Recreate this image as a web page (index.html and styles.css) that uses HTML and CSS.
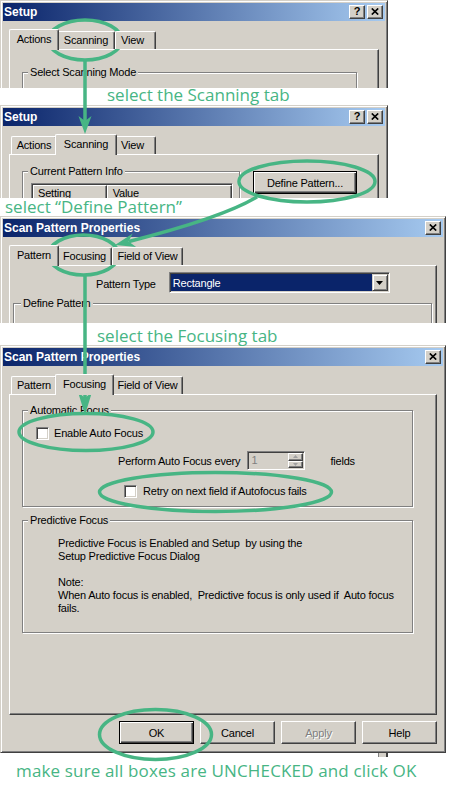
FILE: index.html
```html
<!DOCTYPE html>
<html>
<head>
<meta charset="utf-8">
<title>Setup steps</title>
<link rel="stylesheet" href="styles.css">
</head>
<body>

<div class="cut cut1">
  <div class="win setup tall">
    <div class="titlebar">
      <span class="ttext">Setup</span>
      <span class="tbtns">
        <span class="tbtn">?</span>
        <span class="tbtn"><svg width="8" height="7" viewBox="0 0 8 7"><path d="M0.8 0.5L7.2 6.5M7.2 0.5L0.8 6.5" stroke="#000" stroke-width="1.7"/></svg></span>
      </span>
    </div>
    <div class="client">
      <div class="tabs">
        <div class="tab sel w-actions">Actions</div>
        <div class="tab w-scanning">Scanning</div>
        <div class="tab w-view">View</div>
      </div>
      <div class="panel panel-tall">
        <div class="group g-mode"><span class="glabel">Select Scanning Mode</span></div>
      </div>
    </div>
  </div>
</div>

<div class="strip s1">select the Scanning tab</div>

<div class="cut cut2">
  <div class="win setup tall">
    <div class="titlebar">
      <span class="ttext">Setup</span>
      <span class="tbtns">
        <span class="tbtn">?</span>
        <span class="tbtn"><svg width="8" height="7" viewBox="0 0 8 7"><path d="M0.8 0.5L7.2 6.5M7.2 0.5L0.8 6.5" stroke="#000" stroke-width="1.7"/></svg></span>
      </span>
    </div>
    <div class="client">
      <div class="tabs">
        <div class="tab w-actions">Actions</div>
        <div class="tab sel w-scanning">Scanning</div>
        <div class="tab w-view">View</div>
      </div>
      <div class="panel panel-tall panel-row">
        <div class="group g-info">
          <span class="glabel">Current Pattern Info</span>
          <div class="lv">
            <div class="lvh">
              <div class="lvc lvc-set">Setting</div>
              <div class="lvc lvc-val">Value</div>
            </div>
          </div>
        </div>
        <div class="btn def b-define">Define Pattern...</div>
      </div>
    </div>
  </div>
</div>

<div class="strip s2">select “Define Pattern”</div>

<div class="cut cut3">
  <div class="win spp tall">
    <div class="titlebar">
      <span class="ttext">Scan Pattern Properties</span>
      <span class="tbtns">
        <span class="tbtn"><svg width="8" height="7" viewBox="0 0 8 7"><path d="M0.8 0.5L7.2 6.5M7.2 0.5L0.8 6.5" stroke="#000" stroke-width="1.7"/></svg></span>
      </span>
    </div>
    <div class="client">
      <div class="tabs">
        <div class="tab sel w-pattern">Pattern</div>
        <div class="tab w-focusing">Focusing</div>
        <div class="tab w-fov">Field of View</div>
      </div>
      <div class="panel panel-tall">
        <div class="ptrow">
          <span class="ptlabel">Pattern Type</span>
          <div class="combo">
            <div class="combosel">Rectangle</div>
            <div class="combobtn"><svg width="7" height="4" viewBox="0 0 7 4"><path d="M0 0H7L3.5 4Z" fill="#000"/></svg></div>
          </div>
        </div>
        <div class="group g-def"><span class="glabel gl-def">Define Pattern</span></div>
      </div>
    </div>
  </div>
</div>

<div class="strip s3">select the Focusing tab</div>

<div class="win spp full">
  <div class="titlebar">
    <span class="ttext">Scan Pattern Properties</span>
    <span class="tbtns">
      <span class="tbtn"><svg width="8" height="7" viewBox="0 0 8 7"><path d="M0.8 0.5L7.2 6.5M7.2 0.5L0.8 6.5" stroke="#000" stroke-width="1.7"/></svg></span>
    </span>
  </div>
  <div class="client">
    <div class="tabs">
      <div class="tab w-pattern">Pattern</div>
      <div class="tab sel w-focusing">Focusing</div>
      <div class="tab w-fov">Field of View</div>
    </div>
    <div class="panel panel-main">
      <div class="group g-auto">
        <span class="glabel">Automatic Focus</span>
        <div class="chkrow r-enable"><span class="chk"></span><span>Enable Auto Focus</span></div>
        <div class="perform">
          <span>Perform Auto Focus every</span>
          <div class="spin">
            <div class="spinval">1</div>
            <div class="spinbtns">
              <div class="spinbtn up"><svg width="5" height="3" viewBox="0 0 5 3"><path d="M0 3H5L2.5 0Z" fill="#a0a0a0"/></svg></div>
              <div class="spinbtn dn"><svg width="5" height="3" viewBox="0 0 5 3"><path d="M0 0H5L2.5 3Z" fill="#a0a0a0"/></svg></div>
            </div>
          </div>
          <span class="fields">fields</span>
        </div>
        <div class="chkrow r-retry"><span class="chk"></span><span>Retry on next field if Autofocus fails</span></div>
      </div>
      <div class="group g-pred">
        <span class="glabel">Predictive Focus</span>
        <div class="predtext">Predictive Focus is Enabled and Setup&nbsp; by using the<br>Setup Predictive Focus Dialog<br><br>Note:<br>When Auto focus is enabled,&nbsp; Predictive focus is only used if&nbsp; Auto focus<br>fails.</div>
      </div>
    </div>
    <div class="btnrow">
      <div class="btn def">OK</div>
      <div class="btn">Cancel</div>
      <div class="btn dis">Apply</div>
      <div class="btn">Help</div>
    </div>
  </div>
</div>

<div class="strip s4">
  <div class="remnant"></div>
  <div class="s4text">make sure all boxes are UNCHECKED and click OK</div>
</div>

<svg class="overlay" width="449" height="800" viewBox="0 0 449 800" fill="none" stroke="#47b584" stroke-width="3.5">
  <ellipse cx="85" cy="40" rx="36.5" ry="20"/>
  <path d="M85 60V121"/>
  <path d="M85 134L78.5 116L85 121L91.5 116Z" fill="#47b584" stroke="none"/>
  <ellipse cx="307" cy="181.5" rx="68" ry="20.5"/>
  <path d="M257 197Q222 218 129 241.5"/>
  <path d="M115 245L132.7 233.4L128.6 241.6L136.1 246.9Z" fill="#47b584" stroke="none"/>
  <ellipse cx="83.5" cy="255" rx="35" ry="20"/>
  <path d="M85 275V398"/>
  <path d="M85 415L78 392L85 398L92 392Z" fill="#47b584" stroke="none"/>
  <ellipse cx="86" cy="432" rx="67" ry="18.5"/>
  <ellipse cx="215.5" cy="492" rx="116" ry="19.5"/>
  <ellipse cx="155.5" cy="734.5" rx="56" ry="25"/>
</svg>

</body>
</html>
```

FILE: styles.css
```css
* { box-sizing: border-box; }
html, body { margin: 0; padding: 0; background: #fff; }
body {
  width: 449px;
  height: 800px;
  overflow: hidden;
  position: relative;
  font-family: "Liberation Sans", Arial, sans-serif;
  font-size: 11px;
  letter-spacing: -0.2px;
  color: #000;
}

.cut { overflow: hidden; }
.cut1 { height: 88px; }
.cut2 { height: 93px; }
.cut3 { height: 107px; }

/* window frame */
.win {
  background: #d4d0c8;
  border: 1px solid;
  border-color: #d4d0c8 #404040 #404040 #d4d0c8;
  box-shadow: inset 1px 1px #fff, inset -1px -1px #808080;
  padding: 2px;
}
.setup { width: 388px; }
.spp { width: 446px; }
.tall { height: 300px; }
.full { height: 408px; }

.titlebar {
  height: 18px;
  background: linear-gradient(to right, #0a246a, #a6caf0);
  display: flex;
  align-items: center;
  justify-content: space-between;
  padding: 0 2px 0 1px;
}
.ttext {
  color: #fff;
  font-weight: bold;
  font-size: 12px;
  letter-spacing: 0;
  line-height: 14px;
}
.tbtns { display: flex; gap: 2px; }
.tbtn {
  width: 16px;
  height: 14px;
  background: #d4d0c8;
  border: 1px solid;
  border-color: #fff #404040 #404040 #fff;
  box-shadow: inset -1px -1px #808080;
  display: flex;
  align-items: center;
  justify-content: center;
  font-weight: bold;
  font-size: 11px;
  letter-spacing: 0;
  line-height: 1;
  padding-bottom: 1px;
}

.client { padding: 8px 6px 0; }

/* tabs */
.tabs {
  display: flex;
  align-items: flex-end;
  height: 20px;
  padding-left: 2px;
  position: relative;
  z-index: 2;
}
.tab {
  box-sizing: content-box;
  height: 17px;
  line-height: 17px;
  text-align: center;
  background: #d4d0c8;
  border-top: 1px solid #fff;
  border-left: 1px solid #fff;
  border-right: 1px solid #404040;
  box-shadow: inset -1px 0 #808080;
  border-radius: 2px 2px 0 0;
  white-space: nowrap;
}
.tab.sel {
  height: 20px;
  line-height: 19px;
  padding: 0 2px;
  margin: 0 -2px -1px;
  position: relative;
  z-index: 1;
}
.w-actions { width: 44px; }
.w-scanning { width: 56px; }
.w-view { width: 33px; padding-right: 6px; }
.w-pattern { width: 44px; }
.w-focusing { width: 53px; }
.w-fov { width: 69px; }

/* tab page */
.panel {
  border: 1px solid;
  border-color: #fff #404040 #404040 #fff;
  box-shadow: inset -1px -1px #808080;
}
.panel-tall { height: 200px; }
.panel-main { height: 321px; }
.panel-row { display: flex; align-items: flex-start; }

/* group boxes */
.group {
  border: 1px solid #808080;
  box-shadow: inset 1px 1px #fff, 1px 1px #fff;
}
.glabel {
  display: block;
  width: fit-content;
  margin: -7px 0 0 5px;
  padding: 0 2px;
  background: #d4d0c8;
  line-height: 13px;
  white-space: nowrap;
}
.gl-def { margin-left: 7px; }
.g-mode { margin: 22px 0 0 12px; width: 335px; height: 100px; }
.g-info { margin: 16px 0 0 12px; width: 218px; height: 100px; }
.g-def { margin: 10px 0 0 3px; width: 419px; height: 60px; }
.g-auto { margin: 15px 0 0 12px; width: 391px; height: 97px; }
.g-pred { margin: 13px 0 0 12px; width: 391px; height: 113px; }

/* list view header */
.lv {
  margin: 5px 0 0 8px;
  width: 202px;
  height: 60px;
  background: #fff;
  border: 1px solid;
  border-color: #808080 #fff #fff #808080;
  box-shadow: inset 1px 1px #404040;
  padding: 1px 0 0 1px;
}
.lvh { display: flex; height: 17px; }
.lvc {
  background: #d4d0c8;
  border: 1px solid;
  border-color: #fff #404040 #404040 #fff;
  box-shadow: inset -1px -1px #808080;
  line-height: 15px;
}
.lvc-set { width: 74px; padding-left: 4px; }
.lvc-val { width: 126px; padding-left: 5px; }

/* buttons */
.btn {
  width: 75px;
  height: 23px;
  background: #d4d0c8;
  border: 1px solid;
  border-color: #fff #404040 #404040 #fff;
  box-shadow: inset -1px -1px #808080;
  display: flex;
  align-items: center;
  justify-content: center;
  white-space: nowrap;
}
.btn.def {
  border-color: #000;
  box-shadow: inset 1px 1px #fff, inset -1px -1px #404040, inset -2px -2px #808080;
}
.btn.dis { color: #808080; text-shadow: 1px 1px #fff; }
.b-define { width: 104px; margin: 16px 21px 0 auto; }
.btnrow {
  display: flex;
  justify-content: flex-end;
  gap: 6px;
  margin-top: 6px;
}

/* pattern type row */
.ptrow {
  display: flex;
  align-items: center;
  margin-top: 6px;
}
.ptlabel { margin-left: 86px; padding-top: 2px; }
.combo {
  margin-left: 13px;
  width: 221px;
  height: 21px;
  display: flex;
  background: #fff;
  border: 1px solid;
  border-color: #808080 #fff #fff #808080;
  box-shadow: inset 1px 1px #404040, inset -1px -1px #d4d0c8;
  padding: 1px;
}
.combosel {
  flex: 1;
  background: #0a246a;
  color: #fff;
  padding: 1px 0 0 2px;
  line-height: 16px;
}
.combobtn {
  width: 16px;
  height: 17px;
  background: #d4d0c8;
  border: 1px solid;
  border-color: #d4d0c8 #404040 #404040 #d4d0c8;
  box-shadow: inset 1px 1px #fff, inset -1px -1px #808080;
  display: flex;
  align-items: center;
  justify-content: center;
}

/* checkboxes */
.chkrow { display: flex; align-items: center; line-height: 13px; white-space: nowrap; }
.r-enable { margin: 10px 0 0 13px; gap: 5px; }
.r-retry { margin: 15px 0 0 101px; gap: 6px; }
.chk {
  width: 13px;
  height: 13px;
  background: #fff;
  border: 1px solid;
  border-color: #808080 #fff #fff #808080;
  box-shadow: inset 1px 1px #404040, inset -1px -1px #d4d0c8;
}

/* spin edit */
.perform {
  display: flex;
  align-items: center;
  margin: 11px 0 0 95px;
  white-space: nowrap;
}
.spin {
  margin-left: 7px;
  width: 58px;
  height: 19px;
  display: flex;
  background: #d4d0c8;
  border: 1px solid;
  border-color: #808080 #fff #fff #808080;
  box-shadow: inset 1px 1px #404040, inset -1px -1px #d4d0c8;
  padding: 1px;
}
.spinval { flex: 1; color: #808080; padding-left: 2px; line-height: 15px; }
.spinbtns { width: 15px; display: flex; flex-direction: column; }
.spinbtn {
  flex: 1;
  background: #d4d0c8;
  border: 1px solid;
  border-color: #fff #404040 #404040 #fff;
  box-shadow: inset -1px -1px #808080;
  display: flex;
  align-items: center;
  justify-content: center;
}
.fields { margin-left: 25px; }

.predtext { margin: 10px 0 0 35px; line-height: 13px; white-space: nowrap; }

/* green instruction strips */
.strip {
  font-family: "Open Sans", "Noto Sans", sans-serif;
  font-size: 17px;
  letter-spacing: 0;
  line-height: 12px;
  color: #47b584;
  white-space: nowrap;
  background: #fff;
}
.s1 { height: 17px; padding: 1px 0 0 107px; }
.s2 { height: 18px; padding: 3px 0 0 5px; }
.s3 { height: 22px; padding: 7px 0 0 97px; }
.s4 { height: 47px; padding: 0 0 0 16px; }
.remnant {
  margin-left: 362px;
  width: 10px;
  height: 4px;
  background: #d4d0c8;
  border-left: 1px solid #808080;
  border-right: 2px solid #404040;
}
.s4text { margin-top: 8px; letter-spacing: 0.15px; }

.overlay {
  position: absolute;
  left: 0;
  top: 0;
  pointer-events: none;
}
```
